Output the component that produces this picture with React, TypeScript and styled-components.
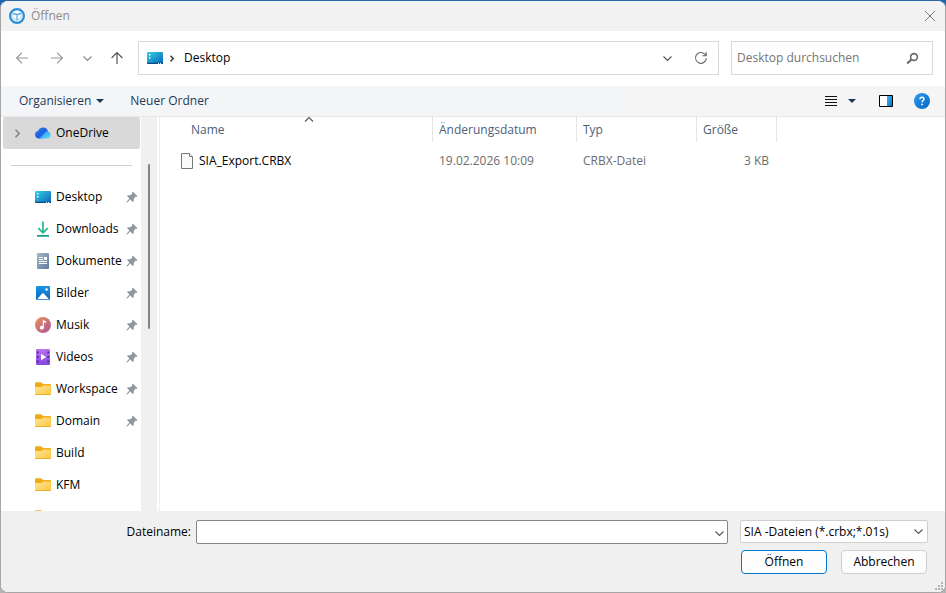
import React from "react";
import styled, { createGlobalStyle, css } from "styled-components";

const GlobalStyle = createGlobalStyle`
  * { box-sizing: border-box; }
  html, body, #root { height: 100%; margin: 0; }
  body {
    background: linear-gradient(#1f66a8 0 36px, #b4b4b4 36px);
    font: 12px/16px "Open Sans", "Noto Sans", sans-serif;
    color: #000;
  }
  button, input, select { font: inherit; color: inherit; margin: 0; }
  svg { display: block; flex: none; }
`;

const Dialog = styled.main`
  display: flex;
  flex-direction: column;
  height: 100%;
  min-height: 320px;
  border: 1px solid #a6a6a6;
  border-top-color: #2b69a6;
  border-radius: 8px;
  overflow: hidden;
  background: #fff;
`;

const TitleBar = styled.header`
  display: flex;
  align-items: center;
  gap: 6px;
  height: 30px;
  flex: none;
  padding: 0 7px 1px 8px;
  background: #f2f2f2;
`;

const Title = styled.h1`
  margin: 0;
  flex: 1;
  font-size: 12px;
  font-weight: 400;
  color: #8c8c8c;
`;

const IconButton = styled.button<{ $width?: number }>`
  display: flex;
  align-items: center;
  justify-content: center;
  flex: none;
  width: ${(p) => p.$width ?? 16}px;
  height: 24px;
  padding: 0;
  border: 0;
  background: none;
`;

const NavBar = styled.nav`
  display: flex;
  align-items: center;
  gap: 12px;
  height: 55px;
  flex: none;
  padding: 0 12px 1px 11px;
`;

const History = styled.div`
  display: flex;
  align-items: center;
  gap: 15px;
  width: 114px;
`;

const Box = css`
  display: flex;
  align-items: center;
  height: 34px;
  border: 1px solid #d9d9d9;
  background: #fff;
`;

const AddressBar = styled.div`
  ${Box}
  flex: 1;
  gap: 4px;
  padding: 0 9px 0 8px;
`;

const Crumb = styled.a`
  flex: 1;
  margin-left: 2px;
  color: #000;
  text-decoration: none;
`;

const AddressActions = styled.div`
  display: flex;
  gap: 18px;
`;

const SearchBox = styled.label`
  ${Box}
  width: 202px;
  padding: 0 13px 0 5px;
`;

const SearchInput = styled.input`
  flex: 1;
  min-width: 0;
  padding: 0;
  border: 0;
  outline: 0;
  background: none;
  &::placeholder { color: #757575; opacity: 1; }
`;

const Toolbar = styled.div`
  display: flex;
  align-items: center;
  gap: 26px;
  height: 31px;
  flex: none;
  padding: 0 15px 0 18px;
  border-bottom: 1px solid #e7e7e7;
  background: linear-gradient(90deg, #f3f5f8, #f5f5f5);
`;

const ToolButton = styled.button`
  display: flex;
  align-items: center;
  gap: 5px;
  padding: 0;
  border: 0;
  background: none;
  color: #1e395b;
`;

const ViewTools = styled.div`
  display: flex;
  align-items: center;
  gap: 20px;
  margin-left: auto;
`;

const ViewPicker = styled.div`
  display: flex;
  gap: 5px;
  margin-right: -2px;
`;

const Body = styled.div`
  display: flex;
  flex: 1;
  min-height: 0;
`;

const Sidebar = styled.aside`
  display: flex;
  width: 156px;
  flex: none;
`;

const Places = styled.ul`
  flex: 1;
  min-width: 0;
  margin: 0;
  padding: 0 1px 0 2px;
  overflow: hidden;
  list-style: none;
`;

const Place = styled.li<{ $selected?: boolean }>`
  border-radius: 2px;
  background: ${(p) => (p.$selected ? "#d9d9d9" : "transparent")};
`;

const PlaceLink = styled.a`
  display: grid;
  grid-template-columns: 32px 16px 1fr 12px;
  align-items: center;
  height: 32px;
  padding-right: 2px;
  color: #000;
  text-decoration: none;
`;

const PlaceName = styled.span`
  padding-left: 5px;
  white-space: nowrap;
`;

const Expander = styled.span`
  display: flex;
  padding-left: 9px;
`;

const Divider = styled.li`
  height: 1px;
  margin: 16px 8px 15px 8px;
  background: #cfcfcf;
`;

const ScrollTrack = styled.div`
  width: 16px;
  padding: 47px 0 0 7px;
  background: #f0f0f0;
`;

const ScrollThumb = styled.div`
  width: 2px;
  height: 165px;
  border-radius: 1px;
  background: #858585;
`;

const Files = styled.section`
  flex: 1;
  min-width: 0;
  margin-left: 2px;
  border-left: 1px solid #f0f0f0;
`;

const FileTable = styled.table`
  width: 100%;
  table-layout: fixed;
  border-collapse: separate;
  border-spacing: 0;
`;

const HeadCell = styled.th<{ $width?: number; $indent?: number }>`
  width: ${(p) => (p.$width ? `${p.$width}px` : "auto")};
  height: 25px;
  padding: 0 0 0 ${(p) => p.$indent ?? 0}px;
  text-align: left;
  font-weight: 400;
  color: #4c607a;
  border-right: ${(p) => (p.$width ? "1px solid #e5e5e5" : "0")};
`;

const HeadLabel = styled.div`
  position: relative;
  padding-left: 6px;
`;

const SortMark = styled.span`
  position: absolute;
  top: -8px;
  left: 50%;
  transform: translateX(-50%);
`;

const Cell = styled.td<{ $align?: string }>`
  height: 38px;
  padding: 0 8px 0 6px;
  text-align: ${(p) => p.$align ?? "left"};
  color: #6d6d6d;
`;

const FileName = styled.div`
  display: flex;
  align-items: center;
  gap: 5px;
  padding-left: 15px;
  color: #000;
`;

const Footer = styled.form`
  position: relative;
  display: grid;
  grid-template-columns: 190px 1fr 188px;
  gap: 6px 0;
  flex: none;
  height: 81px;
  align-content: start;
  padding: 9px 17px 0 0;
  background: #f0f0f0;
`;

const FieldLabel = styled.label`
  align-self: center;
  text-align: right;
`;

const NameField = styled.div`
  display: flex;
  height: 24px;
  margin: 0 12px 0 5px;
  border: 1px solid #868686;
  border-radius: 2px;
  background: #fff;
`;

const NameInput = styled.input`
  flex: 1;
  min-width: 0;
  padding: 0 4px;
  border: 0;
  outline: 0;
  background: none;
`;

const TypeField = styled.div`
  display: grid;
  align-items: center;
  height: 23px;
  border: 1px solid #cfcfcf;
  border-radius: 2px;
  background: #fff;
  & > * { grid-area: 1 / 1; }
  & > svg { justify-self: end; margin-right: 3px; pointer-events: none; }
`;

const TypeSelect = styled.select`
  appearance: none;
  width: 100%;
  height: 21px;
  padding: 0 20px 0 3px;
  border: 0;
  outline: 0;
  background: none;
`;

const Actions = styled.div`
  grid-column: 3;
  display: grid;
  grid-template-columns: 1fr 1fr;
  gap: 14px;
  padding: 0 1px;
`;

const ActionButton = styled.button<{ $primary?: boolean }>`
  height: 24px;
  padding: 0;
  border: 1px solid ${(p) => (p.$primary ? "#0078d4" : "#d0d0d0")};
  border-radius: 4px;
  background: #fdfdfd;
`;

const Grip = styled.span`
  position: absolute;
  right: 1px;
  bottom: 1px;
`;

/* Icons */

type Dir = "up" | "down" | "right";
const chevrons: Record<Dir, string> = {
  down: "M1.5 3.5 5.5 7.5 9.5 3.5",
  up: "M1.5 7.5 5.5 3.5 9.5 7.5",
  right: "M3.5 1.8 7.2 5.5 3.5 9.2",
};
const Chevron = ({ dir, color = "#555", weight = 1.1 }: { dir: Dir; color?: string; weight?: number }) => (
  <svg width="11" height="11" viewBox="0 0 11 11" fill="none" stroke={color} strokeWidth={weight}>
    <path d={chevrons[dir]} />
  </svg>
);

const CrumbChevron = () => (
  <svg width="11" height="11" viewBox="0 0 11 11" fill="none" stroke="#444" strokeWidth="1.5">
    <path d="M3.5 2.8 6.3 5.6 3.5 8.4" />
  </svg>
);

const arrows = {
  back: "M14 8H2.8M8 2.6 2.6 8 8 13.4",
  forward: "M2 8h11.2M8 2.6 13.4 8 8 13.4",
  up: "M8 14V2.8M2.6 8 8 2.6 13.4 8",
};
const Arrow = ({ kind, color }: { kind: keyof typeof arrows; color: string }) => (
  <svg width="16" height="16" viewBox="0 0 16 16" fill="none" stroke={color} strokeWidth="1.2">
    <path d={arrows[kind]} />
  </svg>
);

const AppIcon = () => (
  <svg width="16" height="16" viewBox="0 0 16 16" fill="none">
    <circle cx="8" cy="8" r="6.9" fill="#f4fafe" stroke="#2c8fd6" strokeWidth="2.2" />
    <path d="M3.8 5.4 8 6.4l4.2-1v4.8L8 12.2l-4.2-2z" stroke="#a5d0ee" strokeWidth=".8" />
    <path d="M3.8 5.4 8 6.6l4.2-1.2M8 6.6v5.8" stroke="#4ba3dd" strokeWidth="1.1" />
  </svg>
);

const CloseIcon = () => (
  <svg width="12" height="12" viewBox="0 0 12 12" stroke="#7d7d7d" strokeWidth="1">
    <path d="M1 1 11 11M11 1 1 11" />
  </svg>
);

const RefreshIcon = () => (
  <svg width="14" height="14" viewBox="0 0 14 14" fill="none" stroke="#6c6c6c" strokeWidth="1.1">
    <path d="M12.3 7A5.4 5.4 0 1 1 10.8 3.2L12 4.6M12.2 1v3.8H8.4" />
  </svg>
);

const SearchIcon = () => (
  <svg width="13" height="13" viewBox="0 0 13 13" fill="none" stroke="#686868">
    <circle cx="8" cy="5" r="3.4" strokeWidth="1.6" />
    <path d="M5.4 7.4 1.2 11.4" strokeWidth="2.1" />
  </svg>
);

const Triangle = () => (
  <svg width="8" height="4" viewBox="0 0 8 4">
    <path d="M0 0h8L4 4z" fill="#1e395b" />
  </svg>
);

const ListIcon = () => (
  <svg width="12" height="12" viewBox="0 0 12 12" stroke="#111" strokeWidth="1">
    <path d="M0 1.5h12M0 4.5h12M0 7.5h12M0 10.5h12" />
  </svg>
);

const PaneIcon = () => (
  <svg width="14" height="12" viewBox="0 0 14 12">
    <defs>
      <linearGradient id="pane" x1="0" y1="0" x2="1" y2="1">
        <stop offset="0" stopColor="#3ab5f5" />
        <stop offset="1" stopColor="#0a74d1" />
      </linearGradient>
    </defs>
    <path d="M.5.5h13v11H.5z" fill="#fff" stroke="#000" />
    <path d="M8 1h5v10H8z" fill="url(#pane)" />
  </svg>
);

const HelpIcon = () => (
  <svg width="16" height="16" viewBox="0 0 16 16" fill="none">
    <defs>
      <linearGradient id="help" x1="0" y1="0" x2="1" y2="1">
        <stop offset="0" stopColor="#2b9cf0" />
        <stop offset="1" stopColor="#0667c4" />
      </linearGradient>
    </defs>
    <circle cx="8" cy="8" r="8" fill="url(#help)" />
    <path d="M6 6.2C6 4.9 6.9 4.3 8 4.3s2 .7 2 1.8c0 1.4-1.9 1.5-1.9 3.2" stroke="#fff" strokeWidth="1.4" />
    <circle cx="8.1" cy="11.4" r=".9" fill="#fff" />
  </svg>
);

const DesktopIcon = () => (
  <svg width="16" height="16" viewBox="0 0 16 16">
    <defs>
      <linearGradient id="desk" x1="0" y1="0" x2="1" y2="1">
        <stop offset="0" stopColor="#35d0e0" />
        <stop offset="1" stopColor="#0a63bf" />
      </linearGradient>
    </defs>
    <rect y="2" width="16" height="12" rx="1" fill="url(#desk)" />
    <path d="M0 12.8h16v.2a1 1 0 0 1-1 1H1a1 1 0 0 1-1-1z" fill="#0b4d86" />
    <path d="M2 4h1.5v1.5H2zM2 7h1.5v1.5H2zM11 12.9h1v1h-1zM13 12.9h1v1h-1z" fill="#e6fbff" />
  </svg>
);

const CloudIcon = () => (
  <svg width="16" height="16" viewBox="0 0 16 16">
    <defs>
      <linearGradient id="cloud" x1="0" y1="0" x2="1" y2="1">
        <stop offset="0" stopColor="#3aa5f4" />
        <stop offset=".45" stopColor="#1f5fe0" />
        <stop offset="1" stopColor="#1b6ee8" />
      </linearGradient>
      <linearGradient id="cloudFront" x1="0" y1="0" x2="1" y2="1">
        <stop offset="0" stopColor="#2b8bf2" />
        <stop offset="1" stopColor="#5ce0fd" />
      </linearGradient>
    </defs>
    <path d="M4 13.6A4 4 0 0 1 3.2 5.7 5.2 5.2 0 0 1 13 6.4L7 13.6z" fill="url(#cloud)" />
    <path d="M4.4 13.6 11 6.5a4.6 4.6 0 0 1 2 .1 3.6 3.6 0 0 1-.5 7z" fill="url(#cloudFront)" />
  </svg>
);

const DownloadIcon = () => (
  <svg width="16" height="16" viewBox="0 0 16 16" fill="none" strokeWidth="1.7">
    <path d="M8 .5v11M3.3 7.2 8 11.8l4.7-4.6" stroke="#1fb890" />
    <path d="M2 14.8h12" stroke="#17a086" />
  </svg>
);

const DocumentIcon = () => (
  <svg width="16" height="16" viewBox="0 0 16 16">
    <defs>
      <linearGradient id="doc" x1="0" y1="0" x2="1" y2="1">
        <stop offset="0" stopColor="#a3b9cf" />
        <stop offset="1" stopColor="#5f7b9b" />
      </linearGradient>
    </defs>
    <rect x="2" width="12" height="16" rx="1" fill="url(#doc)" />
    <path d="M4 4h4v1H4zM4 6h4v1H4zM9 4h3v3H9zM4 8h8v1H4zM4 10h8v1H4z" fill="#fff" />
  </svg>
);

const PictureIcon = () => (
  <svg width="16" height="16" viewBox="0 0 16 16">
    <defs>
      <linearGradient id="pic" x1="0" y1="0" x2="0" y2="1">
        <stop offset="0" stopColor="#1c95e8" />
        <stop offset="1" stopColor="#0868bd" />
      </linearGradient>
    </defs>
    <rect x="1" y="1" width="14" height="14" rx="1" fill="url(#pic)" />
    <path d="M2 14.3 7.2 8.6q.8-.8 1.6 0l5.2 5.7z" fill="#fff" />
    <circle cx="11.6" cy="4.5" r="1.2" fill="#fff" />
  </svg>
);

const MusicIcon = () => (
  <svg width="16" height="16" viewBox="0 0 16 16">
    <defs>
      <linearGradient id="music" x1="0" y1="0" x2="1" y2="1">
        <stop offset="0" stopColor="#ec9559" />
        <stop offset="1" stopColor="#a8539c" />
      </linearGradient>
    </defs>
    <circle cx="8" cy="8" r="8" fill="url(#music)" />
    <path d="M7.8 3.2h1l2.3 1.4v1.5L8.9 5.3v5.5a2 1.8 0 1 1-1.1-1.7z" fill="#fff" />
  </svg>
);

const VideoIcon = () => (
  <svg width="16" height="16" viewBox="0 0 16 16">
    <defs>
      <linearGradient id="vid" x1="0" y1="0" x2="0" y2="1">
        <stop offset="0" stopColor="#b774f2" />
        <stop offset="1" stopColor="#8747e0" />
      </linearGradient>
    </defs>
    <rect x="1" width="14" height="16" rx="1" fill="url(#vid)" />
    <path d="M2 2.5h1.6v1.8H2zM2 7h1.6v1.8H2zM2 11.5h1.6v1.8H2zM12.4 2.5H14v1.8h-1.6zM12.4 7H14v1.8h-1.6zM12.4 11.5H14v1.8h-1.6z" fill="#45207f" />
    <path d="M6 4.8 11.2 8 6 11.2z" fill="#fff" />
  </svg>
);

const FolderIcon = () => (
  <svg width="16" height="16" viewBox="0 0 16 16">
    <defs>
      <linearGradient id="folder" x1="0" y1="0" x2="1" y2="1">
        <stop offset="0" stopColor="#ffe497" />
        <stop offset="1" stopColor="#fbc53f" />
      </linearGradient>
    </defs>
    <path d="M0 2.4Q0 1.2 1 1.2h5l2 1.8h7q1 0 1 1V7H0z" fill="#f3ac13" />
    <path d="M0 6h6.5L8 4.5h7.2q.8 0 .8.8v7.9q0 .8-.8.8H.8q-.8 0-.8-.8z" fill="url(#folder)" />
    <path d="M0 13.2h16q0 .8-.8.8H.8q-.8 0-.8-.8z" fill="#e5a52b" />
  </svg>
);

const PinIcon = () => (
  <svg width="12" height="12" viewBox="0 0 12 12">
    <path d="M6.8.6 11.4 5.2 10.3 6 9.6 5.8 7.8 7.8 7.7 10.2 6.8 11 4.3 8.4 1.1 11.6.3 11.6.4 10.9 3.5 7.6 1 5.1 1.9 4.2 4.4 4.2 6.3 2.5 6 1.6z" fill="#8d99a2" />
  </svg>
);

const FileIcon = () => (
  <svg width="13" height="16" viewBox="0 0 13 16" fill="#fafafa" stroke="#777" strokeWidth="1">
    <path d="M.5.5h8l3 3v12H.5z" />
    <path d="M8.5.5v3h3" fill="#fff" />
  </svg>
);

const places = [
  { name: "Desktop", icon: <DesktopIcon />, pinned: true },
  { name: "Downloads", icon: <DownloadIcon />, pinned: true },
  { name: "Dokumente", icon: <DocumentIcon />, pinned: true },
  { name: "Bilder", icon: <PictureIcon />, pinned: true },
  { name: "Musik", icon: <MusicIcon />, pinned: true },
  { name: "Videos", icon: <VideoIcon />, pinned: true },
  { name: "Workspace", icon: <FolderIcon />, pinned: true },
  { name: "Domain", icon: <FolderIcon />, pinned: true },
  { name: "Build", icon: <FolderIcon />, pinned: false },
  { name: "KFM", icon: <FolderIcon />, pinned: false },
];

const files = [{ name: "SIA_Export.CRBX", date: "19.02.2026 10:09", type: "CRBX-Datei", size: "3 KB" }];

export default function App() {
  return (
    <>
      <GlobalStyle />
      <Dialog>
        <TitleBar>
          <AppIcon />
          <Title>Öffnen</Title>
          <IconButton aria-label="Schließen"><CloseIcon /></IconButton>
        </TitleBar>

        <NavBar>
          <History>
            <IconButton $width={20} aria-label="Zurück"><Arrow kind="back" color="#999" /></IconButton>
            <IconButton $width={20} aria-label="Vorwärts"><Arrow kind="forward" color="#999" /></IconButton>
            <IconButton $width={10} aria-label="Verlauf"><Chevron dir="down" color="#888" /></IconButton>
            <IconButton $width={20} aria-label="Nach oben"><Arrow kind="up" color="#555" /></IconButton>
          </History>
          <AddressBar>
            <DesktopIcon />
            <CrumbChevron />
            <Crumb href="#desktop">Desktop</Crumb>
            <AddressActions>
              <IconButton aria-label="Vorherige Orte"><Chevron dir="down" /></IconButton>
              <IconButton aria-label="Aktualisieren"><RefreshIcon /></IconButton>
            </AddressActions>
          </AddressBar>
          <SearchBox>
            <SearchInput type="text" placeholder="Desktop durchsuchen" aria-label="Desktop durchsuchen" />
            <SearchIcon />
          </SearchBox>
        </NavBar>

        <Toolbar>
          <ToolButton>Organisieren <Triangle /></ToolButton>
          <ToolButton>Neuer Ordner</ToolButton>
          <ViewTools>
            <ViewPicker>
              <IconButton aria-label="Ansicht"><ListIcon /></IconButton>
              <IconButton aria-label="Weitere Optionen"><Triangle /></IconButton>
            </ViewPicker>
            <IconButton aria-label="Vorschaufenster"><PaneIcon /></IconButton>
            <IconButton aria-label="Hilfe"><HelpIcon /></IconButton>
          </ViewTools>
        </Toolbar>

        <Body>
          <Sidebar>
            <Places>
              <Place $selected>
                <PlaceLink href="#onedrive">
                  <Expander><Chevron dir="right" color="#858585" weight={1.6} /></Expander>
                  <CloudIcon />
                  <PlaceName>OneDrive</PlaceName>
                </PlaceLink>
              </Place>
              <Divider role="separator" />
              {places.map((place) => (
                <Place key={place.name}>
                  <PlaceLink href={`#${place.name.toLowerCase()}`}>
                    <Expander />
                    {place.icon}
                    <PlaceName>{place.name}</PlaceName>
                    {place.pinned && <PinIcon />}
                  </PlaceLink>
                </Place>
              ))}
              <Place>
                <PlaceLink href="#ordner" aria-label="Ordner">
                  <Expander />
                  <FolderIcon />
                </PlaceLink>
              </Place>
            </Places>
            <ScrollTrack><ScrollThumb /></ScrollTrack>
          </Sidebar>

          <Files>
            <FileTable>
              <thead>
                <tr>
                  <HeadCell $width={273} $indent={25} aria-sort="ascending">
                    <HeadLabel>Name<SortMark><Chevron dir="up" /></SortMark></HeadLabel>
                  </HeadCell>
                  <HeadCell $width={144}><HeadLabel>Änderungsdatum</HeadLabel></HeadCell>
                  <HeadCell $width={120}><HeadLabel>Typ</HeadLabel></HeadCell>
                  <HeadCell $width={80}><HeadLabel>Größe</HeadLabel></HeadCell>
                  <HeadCell aria-hidden="true" />
                </tr>
              </thead>
              <tbody>
                {files.map((file) => (
                  <tr key={file.name}>
                    <Cell><FileName><FileIcon />{file.name}</FileName></Cell>
                    <Cell>{file.date}</Cell>
                    <Cell>{file.type}</Cell>
                    <Cell $align="right">{file.size}</Cell>
                    <Cell />
                  </tr>
                ))}
              </tbody>
            </FileTable>
          </Files>
        </Body>

        <Footer onSubmit={(e) => e.preventDefault()}>
          <FieldLabel htmlFor="filename">Dateiname:</FieldLabel>
          <NameField>
            <NameInput id="filename" type="text" />
            <IconButton type="button" aria-label="Dateiliste öffnen"><Chevron dir="down" /></IconButton>
          </NameField>
          <TypeField>
            <TypeSelect aria-label="Dateityp">
              <option>SIA -Dateien (*.crbx;*.01s)</option>
            </TypeSelect>
            <Chevron dir="down" />
          </TypeField>
          <Actions>
            <ActionButton $primary type="submit">Öffnen</ActionButton>
            <ActionButton type="button">Abbrechen</ActionButton>
          </Actions>
          <Grip>
            <svg width="10" height="10" viewBox="0 0 10 10" fill="#b5b5b5">
              <path d="M7 1h2v2H7zM4 4h2v2H4zM7 4h2v2H7zM1 7h2v2H1zM4 7h2v2H4zM7 7h2v2H7z" />
            </svg>
          </Grip>
        </Footer>
      </Dialog>
    </>
  );
}
